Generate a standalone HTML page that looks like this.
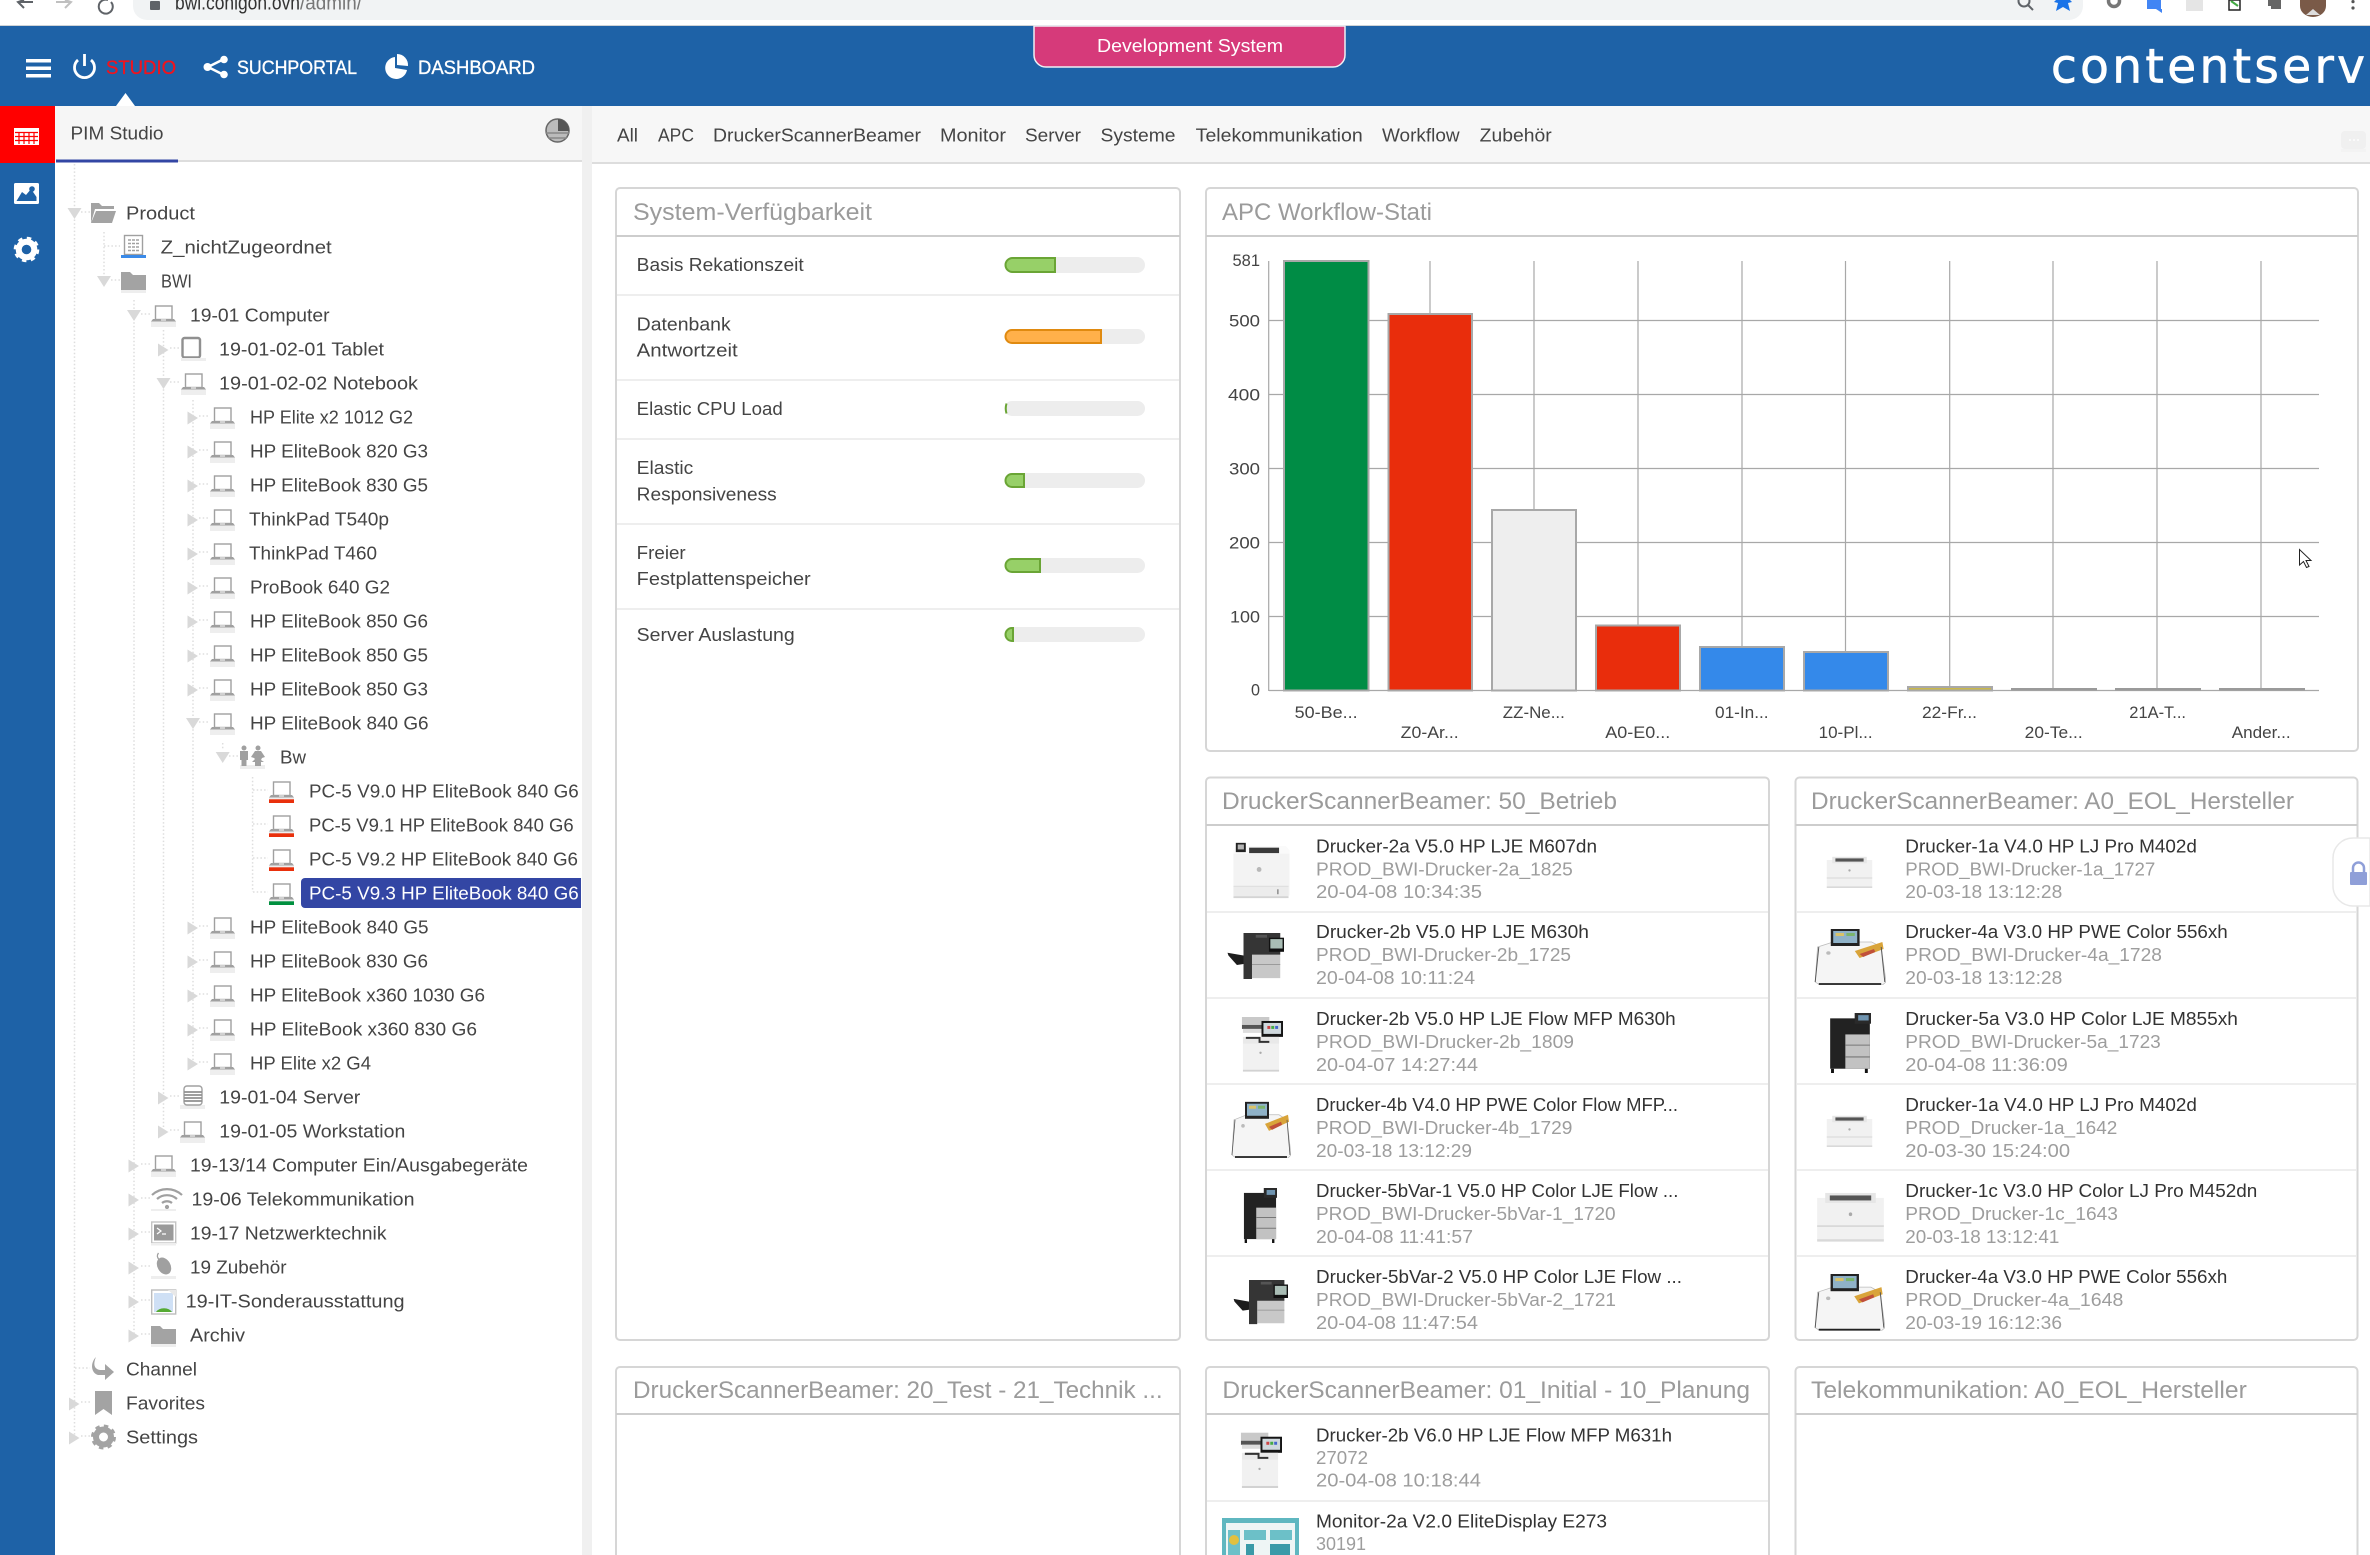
<!DOCTYPE html>
<html lang="de"><head><meta charset="utf-8"><title>contentserv</title>
<style>
html,body{margin:0;padding:0;background:#fff;width:2370px;height:1555px;overflow:hidden}
svg{display:block;position:absolute;left:0;top:0}
text{font-family:"Liberation Sans",sans-serif;font-size:18px;fill:#444;white-space:pre}
.ti{font-size:24px;fill:#9b9b9b}
.a{fill:#333}
.b{fill:#9d9d9d}
.l{font-size:17px;fill:#444}
.h{font-size:19px;fill:#fff;stroke:#fff;stroke-width:.35px}
</style></head><body>
<svg width="2370" height="1555" viewBox="0 0 2370 1555" xmlns="http://www.w3.org/2000/svg">
<defs>
<path id="r" d="M-5.5 -5.5L5 1 -5.500 7.500z" fill="#d9d9d9"/>
<path id="d" d="M-7 -5H7L0 6z" fill="#d9d9d9"/>
<g id="lap"><rect x="4.500" y="-9" width="16.500" height="13.500" fill="#fff" stroke="#a0a0a0" stroke-width="1.400"/><path d="M2 4H23L25 6.500H0z" fill="#a0a0a0"/><rect x="10" y="4.500" width="5" height="1" fill="#fff"/><rect y="6.500" width="25" height="5.500" fill="#eee"/></g>
<g id="fol"><path d="M0 -9H9L12 -6H25V9H0z" fill="#a3a3a3"/><rect y="9" width="25" height="3" fill="#eee"/></g>
<g id="gear"><circle r="7.500" fill="none" stroke="#a3a3a3" stroke-width="6"/><circle r="10.500" fill="none" stroke="#a3a3a3" stroke-width="4" stroke-dasharray="4.200 4.050"/></g>
<symbol id="pw" viewBox="0 0 60 56" preserveAspectRatio="none"><path d="M1 8L4 3.500H56L60 8V53L56 56H4L1 53z" fill="#f3f3f3"/><path d="M1 8L4 3.500H56L60 8V11H1z" fill="#fafafa"/><rect x="1" y="44" width="58" height="10" fill="#ececec"/><rect x="1" y="43.500" width="58" height=".8" fill="#d8d8d8"/><rect x="1" y="54" width="58" height="2" fill="#d4d4d4"/><rect x="3.500" y="0" width="10.500" height="9.500" fill="#222"/><rect x="5.500" y="1.800" width="6.500" height="5" fill="#b5b5b5"/><rect x="17.500" y="5" width="31.500" height="5.500" fill="#3a3a3a"/><circle cx="28" cy="27" r="2.500" fill="#b8b8b8"/><rect x="47" y="47" width="1.500" height="5" fill="#888"/></symbol>
<symbol id="pd" viewBox="0 0 60 50" preserveAspectRatio="none"><path d="M17 0H56V48H17z" fill="#c8c8c8"/><path d="M17 0H56V23H26V49H17z" fill="#353535"/><path d="M0 21L17 24V33L10 34 1 24z" fill="#1d1d1d"/><rect x="44" y="5" width="16" height="15" fill="#111"/><rect x="45.500" y="6.500" width="13" height="10" fill="#a9bdb5"/><rect x="26" y="33" width="30" height="1" fill="#999"/><rect x="30" y="2" width="12" height="3" fill="#555"/></symbol>
<symbol id="pm" viewBox="0 0 44 56" preserveAspectRatio="none"><rect x="2" y="1" width="28" height="8" fill="#c9c9c9"/><rect x="2" y="9" width="24" height="4" fill="#555"/><rect x="3" y="13" width="22" height="4" fill="#ddd"/><rect x="22" y="5" width="22" height="16" fill="#151515"/><rect x="24" y="7" width="18" height="11" fill="#cfd8dd"/><rect x="28" y="10" width="3" height="3" fill="#c44"/><rect x="32" y="10" width="3" height="3" fill="#4a4"/><rect x="36" y="10" width="3" height="3" fill="#46c"/><rect x="3" y="21" width="37" height="7" fill="#e9e9e9"/><path d="M6 22H20V26H30" stroke="#333" stroke-width="2" fill="none"/><rect x="3" y="28" width="37" height="26" fill="#f1f1f1"/><rect x="3" y="54" width="37" height="2" fill="#d2d2d2"/><circle cx="21" cy="37" r="1.200" fill="#aaa"/></symbol>
<symbol id="pf" viewBox="0 0 60 56" preserveAspectRatio="none"><path d="M3 18L16 13H48L56 18 60 53 57 56H5L1 53z" fill="#f5f5f5" stroke="#bbb" stroke-width=".7"/><rect x="14" y="0" width="24" height="17" fill="#222"/><rect x="16" y="2" width="20" height="12" fill="#8fb2c8"/><rect x="18" y="4" width="7" height="3" fill="#d9c36a"/><rect x="27" y="4" width="7" height="3" fill="#7bb56b"/><path d="M34 22L57 13 58 20 38 29z" fill="#d9a43a"/><path d="M38 25L50 20 51 23 41 28z" fill="#c0503a"/><path d="M4 55H56" stroke="#222" stroke-width="1.800"/><path d="M1 53L4 18" stroke="#555" stroke-width=".8"/><path d="M59 53L56 18" stroke="#555" stroke-width=".8"/><circle cx="12" cy="24" r="1.800" fill="#bbb"/></symbol>
<symbol id="pk" viewBox="0 0 36 56" preserveAspectRatio="none"><rect x="1" y="5" width="34" height="47" fill="#222"/><rect x="14" y="20" width="21" height="32" fill="#c2c2c2"/><rect x="22" y="0" width="14" height="10" fill="#2a2a2a"/><rect x="25" y="2" width="9" height="5" fill="#6f94b0"/><path d="M14 30H35M14 41H35" stroke="#777"/><path d="M3 52V56M32 52V56" stroke="#111" stroke-width="2.500"/></symbol>
<symbol id="pl" viewBox="0 0 60 40" preserveAspectRatio="none"><rect x="1" y="5" width="58" height="34" fill="#f1f1f1"/><rect x="1" y="38" width="58" height="2" fill="#d9d9d9"/><rect x="8" y="1" width="44" height="8" fill="#e6e6e6"/><rect x="12" y="3" width="36" height="4" fill="#555"/><rect x="1" y="27" width="58" height="1" fill="#cfcfcf"/><circle cx="30" cy="18" r="1.500" fill="#aaa"/></symbol>
</defs>

<!-- chrome -->
<rect width="2370" height="26" fill="#fff"/>
<path d="M133 0H2083V6A14 14 0 0 1 2069 20H147A14 14 0 0 1 133 6z" fill="#f1f3f4"/>
<rect y="25" width="2370" height="1" fill="#cfd3d6"/>
<g fill="none" stroke="#5f6368" stroke-width="2">
<path d="M33 2H18M24 0L18 2 24 8"/>
<path d="M56 2H71M65 0L71 2 65 8" stroke="#c0c0c0"/>
<path d="M111 2A7 7 0 1 1 108 0"/>
<circle cx="2024" cy="1" r="5.500"/><path d="M2028 5L2033 10"/>
<circle cx="2114" cy="1" r="5.500" stroke="#777" stroke-width="3.500"/>
</g>
<rect x="150" y="1" width="10" height="9" rx="1" fill="#5f6368"/>
<path d="M2056 0H2070L2072 2 2068 3 2070 11 2063 7 2056 11 2058 3 2054 2z" fill="#1a73e8"/>
<rect x="2147" y="0" width="14" height="9" fill="#4285f4"/><path d="M2156 9H2162V13z" fill="#4285f4"/>
<rect x="2186" y="0" width="17" height="11" fill="#e5e5e5"/>
<path d="M2229 0H2240V10H2229z" fill="#fff" stroke="#222" stroke-width="1.500"/><path d="M2231 1L2238 6" stroke="#4a4" stroke-width="2"/>
<path d="M2268 0H2281V9H2271V6H2268z" fill="#666"/>
<path d="M2300 0H2326V6A13 11 0 0 1 2300 6z" fill="#7a5a48"/><path d="M2306 15L2313 9 2320 15z" fill="#ddd"/>
<circle cx="2353" cy="1.600" r="1.600" fill="#555"/><circle cx="2353" cy="8" r="1.600" fill="#555"/>
<text x="175" y="9.500" style="font-size:20px;fill:#333" textLength="125" lengthAdjust="spacingAndGlyphs">bwi.conigon.ovh</text>
<text x="300" y="9.500" style="font-size:20px;fill:#777" textLength="62" lengthAdjust="spacingAndGlyphs">/admin/</text>

<!-- app header -->
<rect y="26" width="2370" height="80" fill="#1e62a7"/>
<rect x="26" y="59" width="25" height="3.500" fill="#fff"/><rect x="26" y="66.500" width="25" height="3.500" fill="#fff"/><rect x="26" y="74" width="25" height="3.500" fill="#fff"/>
<path d="M78 60A10 10 0 1 0 91 60M84.500 54V66" fill="none" stroke="#fff" stroke-width="2.800"/>
<text class="h" x="106" y="74" style="fill:#f0141e;stroke:#f0141e" textLength="70" lengthAdjust="spacingAndGlyphs">STUDIO</text>
<path d="M224 59L208 67 224 75" fill="none" stroke="#fff" stroke-width="2.500"/>
<circle cx="224" cy="59.500" r="3.800" fill="#fff"/><circle cx="207.500" cy="67" r="4" fill="#fff"/><circle cx="224" cy="74.500" r="3.800" fill="#fff"/>
<text class="h" x="237" y="74" textLength="120" lengthAdjust="spacingAndGlyphs">SUCHPORTAL</text>
<path d="M395 57A11 11 0 1 0 407 70L395 68z" fill="#fff"/><path d="M397 54A11 11 0 0 1 408 66L397 65z" fill="#fff"/>
<text class="h" x="418" y="74" textLength="117" lengthAdjust="spacingAndGlyphs">DASHBOARD</text>
<path d="M116 106L125.500 93 135 106z" fill="#fff"/>
<path d="M1034 26V55A12 12 0 0 0 1046 67H1333A12 12 0 0 0 1345 55V26z" fill="#d63a7a" stroke="#eef0f5" stroke-width="1.500"/>
<text x="1097" y="52" style="fill:#fff" textLength="186" lengthAdjust="spacingAndGlyphs">Development System</text>
<text x="2051" y="82.500" style="font-family:'DejaVu Sans',sans-serif;font-size:47px;fill:#fff;stroke:#fff;stroke-width:.7px" textLength="314">contentserv</text>

<!-- left rail -->
<rect y="106" width="55" height="1449" fill="#1e62a7"/>
<rect y="106" width="55" height="57" fill="#f00"/>
<rect x="14" y="128" width="25" height="17" fill="#fff"/>
<path d="M15 132.500H38M15 136.500H38M15 140.500H38M19 132V144M24 132V144M29 132V144M34 132V144" stroke="#f00" stroke-width="1.200"/>
<rect x="14" y="183" width="25" height="21" rx="1.500" fill="#fff"/>
<path d="M16.500 201L22 192 26 195 31 189 36.500 197V201z" fill="#1e62a7"/><circle cx="32" cy="189" r="2.800" fill="#1e62a7"/>
<g transform="translate(26.500 249.500)"><circle r="7.800" fill="none" stroke="#fff" stroke-width="6"/><circle r="10.800" fill="none" stroke="#fff" stroke-width="4" stroke-dasharray="4.200 4.280"/></g>

<!-- tree panel header -->
<rect x="55" y="106" width="527" height="54" fill="#f6f6f6"/>
<rect x="56" y="160" width="526" height="2" fill="#ddd"/>
<rect x="56" y="159.500" width="122" height="3" fill="#3346a4"/>
<text x="70.500" y="139.500" textLength="93" lengthAdjust="spacingAndGlyphs">PIM Studio</text>
<circle cx="557.500" cy="130.500" r="11.500" fill="#bbb" stroke="#666" stroke-width="1.500"/>
<path d="M558 119A11.500 11.500 0 0 1 569 131H558z" fill="#555"/><path d="M546 133H569M548 138H567" stroke="#888" stroke-width="1.500"/>
<rect x="582" y="106" width="10" height="1449" fill="#f0f0f0"/>
<rect x="592" y="106" width="1778" height="56" fill="#f7f7f7"/>
<rect x="592" y="162" width="1778" height="2" fill="#ddd"/>
<g>
<text x="617" y="141.500" textLength="21" lengthAdjust="spacingAndGlyphs">All</text>
<text x="658" y="141.500" textLength="36" lengthAdjust="spacingAndGlyphs">APC</text>
<text x="713" y="141.500" textLength="208" lengthAdjust="spacingAndGlyphs">DruckerScannerBeamer</text>
<text x="940" y="141.500" textLength="66" lengthAdjust="spacingAndGlyphs">Monitor</text>
<text x="1025" y="141.500" textLength="56" lengthAdjust="spacingAndGlyphs">Server</text>
<text x="1100.500" y="141.500" textLength="75" lengthAdjust="spacingAndGlyphs">Systeme</text>
<text x="1195.700" y="141.500" textLength="167" lengthAdjust="spacingAndGlyphs">Telekommunikation</text>
<text x="1382" y="141.500" textLength="77.600" lengthAdjust="spacingAndGlyphs">Workflow</text>
<text x="1479.700" y="141.500" textLength="72" lengthAdjust="spacingAndGlyphs">Zubehör</text>
</g>
<path d="M2345 131H2362A4 4 0 0 1 2366 135V145A4 4 0 0 1 2362 149H2345A4 4 0 0 1 2341 145V135A4 4 0 0 1 2345 131z" fill="#f0f0f0"/>
<path d="M2349 140h2M2353 140h2M2357 140h2" stroke="#fafafa" stroke-width="2"/>
<rect x="2341" y="149" width="25" height="3" fill="#f3f3f3"/>

<!-- tree lines -->
<g fill="none" stroke="#dedede" stroke-width="1.500" stroke-dasharray="1.500 2.200">
<path d="M74.500 164V1436M104 232V276M134 300V1335M163.500 330V1131M193 400V1063M222.700 743V750M252.600 777V892"/>
<path d="M81 212h9M104 246h16M111 280h9M141 314h9M170 348h10M170 382h10M199 416h10M199 450h10M199 484h10M199 518h10M199 552h10M199 586h10M199 620h10M199 654h10M199 688h10M199 722h10M229 756h10M253 790h15M253 824h15M253 858h15M253 892h15M199 926h10M199 960h10M199 994h10M199 1028h10M199 1062h10M170 1096h9M170 1130h9M141 1164h9M141 1198h9M141 1232h9M141 1266h9M141 1300h9M141 1334h9M75 1368h15M81 1402h9M81 1436h9"/>
</g>

<!-- tree arrows -->
<use href="#d" x="74.500" y="213"/><use href="#d" x="104" y="281"/><use href="#d" x="134" y="315"/><use href="#r" x="163.500" y="349"/><use href="#d" x="163.500" y="383"/>
<use href="#r" x="193" y="417"/><use href="#r" x="193" y="451"/><use href="#r" x="193" y="485"/><use href="#r" x="193" y="519"/><use href="#r" x="193" y="553"/><use href="#r" x="193" y="587"/><use href="#r" x="193" y="621"/><use href="#r" x="193" y="655"/><use href="#r" x="193" y="689"/><use href="#d" x="193" y="723"/><use href="#d" x="222.700" y="757"/>
<use href="#r" x="193" y="927"/><use href="#r" x="193" y="961"/><use href="#r" x="193" y="995"/><use href="#r" x="193" y="1029"/><use href="#r" x="193" y="1063"/>
<use href="#r" x="163.500" y="1097"/><use href="#r" x="163.500" y="1131"/>
<use href="#r" x="134" y="1165"/><use href="#r" x="134" y="1199"/><use href="#r" x="134" y="1233"/><use href="#r" x="134" y="1267"/><use href="#r" x="134" y="1301"/><use href="#r" x="134" y="1335"/>
<use href="#r" x="74.500" y="1403"/><use href="#r" x="74.500" y="1437"/>

<!-- tree icons -->
<path d="M91 203H99L102 206H114V209H95L91 223z" fill="#a3a3a3"/><path d="M96 211H116L112 223H91z" fill="#a3a3a3"/>
<g transform="translate(121 247)"><rect x="3.500" y="-11.500" width="18" height="19" fill="#fff" stroke="#a0a0a0" stroke-width="1.400"/><path d="M7 -7H18M7 -3.500H18M7 0H18M7 3.500H18" stroke="#a0a0a0" stroke-width="1.500" stroke-dasharray="3 1"/><rect y="8" width="25" height="3" fill="#3a8ae8"/></g>
<use href="#fol" x="121" y="281"/>
<use href="#lap" x="151" y="315"/>
<g transform="translate(181 349)"><rect x="1.500" y="-11" width="17.500" height="19.500" rx="2" fill="#fff" stroke="#909090" stroke-width="2.400"/><rect y="9" width="25" height="3" fill="#eee"/></g>
<use href="#lap" x="181" y="383"/>
<use href="#lap" x="210" y="417"/><use href="#lap" x="210" y="451"/><use href="#lap" x="210" y="485"/><use href="#lap" x="210" y="519"/><use href="#lap" x="210" y="553"/><use href="#lap" x="210" y="587"/><use href="#lap" x="210" y="621"/><use href="#lap" x="210" y="655"/><use href="#lap" x="210" y="689"/><use href="#lap" x="210" y="723"/>
<g transform="translate(240 757)"><rect y="8" width="25" height="4" fill="#eee"/><circle cx="4" cy="-9" r="2.500" fill="#a0a0a0"/><path d="M0 -6H8V3H6.500V9H1.500V3H0z" fill="#a0a0a0"/><circle cx="18" cy="-9" r="2.500" fill="#a0a0a0"/><path d="M15 -6H21L25 0 22 1 21 3 24 5H21V9H15V5H12L15 2 14 1 11 0z" fill="#a0a0a0"/></g>
<use href="#lap" x="269" y="791"/><rect x="269" y="799.300" width="25" height="3.700" fill="#e9300c"/>
<use href="#lap" x="269" y="825"/><rect x="269" y="833.300" width="25" height="3.700" fill="#e9300c"/>
<use href="#lap" x="269" y="859"/><rect x="269" y="867.300" width="25" height="3.700" fill="#e9300c"/>
<path d="M305 878H581V908H305A4 4 0 0 1 301 904V882A4 4 0 0 1 305 878z" fill="#3346a4"/>
<use href="#lap" x="269" y="893"/><rect x="269" y="901.300" width="25" height="3.700" fill="#00903f"/>
<use href="#lap" x="210" y="927"/><use href="#lap" x="210" y="961"/><use href="#lap" x="210" y="995"/><use href="#lap" x="210" y="1029"/><use href="#lap" x="210" y="1063"/>
<g transform="translate(180 1097)"><rect y="8" width="25" height="4" fill="#eee"/><rect x="4" y="-11" width="18" height="19" rx="3" fill="#fff" stroke="#a0a0a0" stroke-width="1.400"/><path d="M4 -5H22M4 -2H22M4 1H22M4 4H22" stroke="#909090" stroke-width="1.800"/></g>
<use href="#lap" x="180" y="1131"/>
<use href="#lap" x="151" y="1165"/>
<g transform="translate(151 1199)" fill="none" stroke="#a0a0a0" stroke-width="2.200"><path d="M1 -4A22 22 0 0 1 31 -4M6 0A15 15 0 0 1 26 0M11 4A8 8 0 0 1 21 4"/><circle cx="16" cy="8" r="1" /><rect x="0" y="10" width="25" height="2" fill="#eee" stroke="none"/></g>
<g transform="translate(151 1233)"><rect x=".700" y="-11" width="24" height="21" fill="#fff" stroke="#c4c4c4" stroke-width="1.400"/><rect x="3" y="-8.500" width="19.500" height="16" fill="#9a9a9a"/><path d="M6 -5L10 -2 6 1M11 1H15" fill="none" stroke="#fff" stroke-width="1.200"/><rect y="10" width="25" height="2.500" fill="#eee"/></g>
<g transform="translate(151 1267)"><ellipse cx="13" cy="-1" rx="6.500" ry="9" transform="rotate(-30 13 -1)" fill="#a0a0a0"/><path d="M8.500 -7C5.500 -10 6 -12 7.500 -14" stroke="#a0a0a0" fill="none" stroke-width="1.400"/><rect y="9" width="25" height="3" fill="#eee"/></g>
<g transform="translate(151 1301)"><rect x=".700" y="-11" width="24" height="24" fill="#fff" stroke="#bcbcbc" stroke-width="1.400"/><rect x="3" y="-8" width="19" height="19" fill="#cfe0f5"/><path d="M5 11A9 7 0 0 1 21 11z" fill="#55aa33"/><path d="M17 -11L25 -4V-11z" fill="#e8e8e8"/></g>
<use href="#fol" x="151" y="1335"/>
<path d="M96 1357C93 1364 94 1369 100 1370H105V1364L114 1372 105 1380V1375H98C91 1373 90 1363 96 1357z" fill="#a3a3a3"/>
<path d="M95 1391H112V1415L103.500 1409 95 1415z" fill="#a3a3a3"/>
<use href="#gear" x="103.500" y="1437"/>

<!-- tree text -->
<g>
<text x="126" y="219.500" textLength="69" lengthAdjust="spacingAndGlyphs">Product</text>
<text x="160.700" y="253.500" textLength="171" lengthAdjust="spacingAndGlyphs">Z_nichtZugeordnet</text>
<text x="161" y="287.500" textLength="31" lengthAdjust="spacingAndGlyphs">BWI</text>
<text x="190" y="321.500" textLength="139.600" lengthAdjust="spacingAndGlyphs">19-01 Computer</text>
<text x="219" y="355.500" textLength="165" lengthAdjust="spacingAndGlyphs">19-01-02-01 Tablet</text>
<text x="219" y="389.500" textLength="199" lengthAdjust="spacingAndGlyphs">19-01-02-02 Notebook</text>
<text x="250" y="423.500" textLength="163" lengthAdjust="spacingAndGlyphs">HP Elite x2 1012 G2</text>
<text x="250" y="457.500" textLength="178" lengthAdjust="spacingAndGlyphs">HP EliteBook 820 G3</text>
<text x="250" y="491.500" textLength="178" lengthAdjust="spacingAndGlyphs">HP EliteBook 830 G5</text>
<text x="249" y="525.500" textLength="140" lengthAdjust="spacingAndGlyphs">ThinkPad T540p</text>
<text x="249" y="559.500" textLength="128" lengthAdjust="spacingAndGlyphs">ThinkPad T460</text>
<text x="250" y="593.500" textLength="140" lengthAdjust="spacingAndGlyphs">ProBook 640 G2</text>
<text x="250" y="627.500" textLength="178" lengthAdjust="spacingAndGlyphs">HP EliteBook 850 G6</text>
<text x="250" y="661.500" textLength="178" lengthAdjust="spacingAndGlyphs">HP EliteBook 850 G5</text>
<text x="250" y="695.500" textLength="178" lengthAdjust="spacingAndGlyphs">HP EliteBook 850 G3</text>
<text x="250" y="729.500" textLength="178.600" lengthAdjust="spacingAndGlyphs">HP EliteBook 840 G6</text>
<text x="280" y="763.500" textLength="26" lengthAdjust="spacingAndGlyphs">Bw</text>
<text x="309" y="797.500" textLength="269.700" lengthAdjust="spacingAndGlyphs">PC-5 V9.0 HP EliteBook 840 G6</text>
<text x="309" y="831.500" textLength="264.700" lengthAdjust="spacingAndGlyphs">PC-5 V9.1 HP EliteBook 840 G6</text>
<text x="309" y="865.500" textLength="269" lengthAdjust="spacingAndGlyphs">PC-5 V9.2 HP EliteBook 840 G6</text>
<text x="309" y="899.500" style="fill:#fff" textLength="269.700" lengthAdjust="spacingAndGlyphs">PC-5 V9.3 HP EliteBook 840 G6</text>
<text x="250" y="933.500" textLength="178.600" lengthAdjust="spacingAndGlyphs">HP EliteBook 840 G5</text>
<text x="250" y="967.500" textLength="178" lengthAdjust="spacingAndGlyphs">HP EliteBook 830 G6</text>
<text x="250" y="1001.500" textLength="235" lengthAdjust="spacingAndGlyphs">HP EliteBook x360 1030 G6</text>
<text x="250" y="1035.500" textLength="227" lengthAdjust="spacingAndGlyphs">HP EliteBook x360 830 G6</text>
<text x="250" y="1069.500" textLength="121" lengthAdjust="spacingAndGlyphs">HP Elite x2 G4</text>
<text x="219.300" y="1103.500" textLength="141" lengthAdjust="spacingAndGlyphs">19-01-04 Server</text>
<text x="219.300" y="1137.500" textLength="186" lengthAdjust="spacingAndGlyphs">19-01-05 Workstation</text>
<text x="190" y="1171.500" textLength="338" lengthAdjust="spacingAndGlyphs">19-13/14 Computer Ein/Ausgabegeräte</text>
<text x="191.500" y="1205.500" textLength="223" lengthAdjust="spacingAndGlyphs">19-06 Telekommunikation</text>
<text x="190" y="1239.500" textLength="196.500" lengthAdjust="spacingAndGlyphs">19-17 Netzwerktechnik</text>
<text x="190" y="1273.500" textLength="96.600" lengthAdjust="spacingAndGlyphs">19 Zubehör</text>
<text x="185.600" y="1307.500" textLength="219" lengthAdjust="spacingAndGlyphs">19-IT-Sonderausstattung</text>
<text x="190" y="1341.500" textLength="55" lengthAdjust="spacingAndGlyphs">Archiv</text>
<text x="126" y="1375.500" textLength="71" lengthAdjust="spacingAndGlyphs">Channel</text>
<text x="126" y="1409.500" textLength="79" lengthAdjust="spacingAndGlyphs">Favorites</text>
<text x="126" y="1443.500" textLength="72" lengthAdjust="spacingAndGlyphs">Settings</text>
</g>

<!-- panel frames -->
<g fill="#fff" stroke="#d6d6d6" stroke-width="2">
<rect x="616" y="188" width="564" height="1152" rx="4"/>
<rect x="1206" y="188" width="1152" height="563" rx="4"/>
<rect x="1206" y="777.500" width="563" height="562.500" rx="4"/>
<rect x="1795.500" y="777.500" width="562" height="562.500" rx="4"/>
<path d="M616 1555V1371A4 4 0 0 1 620 1367H1176A4 4 0 0 1 1180 1371V1555"/>
<path d="M1206 1555V1371A4 4 0 0 1 1210 1367H1765A4 4 0 0 1 1769 1371V1555"/>
<path d="M1795.500 1555V1371A4 4 0 0 1 1799.500 1367H2353.500A4 4 0 0 1 2357.500 1371V1555"/>
</g>
<g stroke="#cdcdcd" stroke-width="2">
<path d="M616 236H1180M1206 236H2358M1206 825H1769M1795.500 825H2357.500M616 1414H1180M1206 1414H1769M1795.500 1414H2357.500"/>
</g>
<g stroke="#eee" stroke-width="2">
<path d="M617 295H1179M617 380H1179M617 439H1179M617 524H1179M617 609H1179"/>
<path d="M1207 912H1768M1207 998H1768M1207 1084H1768M1207 1170H1768M1207 1256H1768"/>
<path d="M1797 912H2356M1797 998H2356M1797 1084H2356M1797 1170H2356M1797 1256H2356"/>
<path d="M1207 1501H1768"/>
</g>
<!-- titles -->
<text class="ti" x="633" y="220" textLength="239" lengthAdjust="spacingAndGlyphs">System-Verfügbarkeit</text>
<text class="ti" x="1222" y="220" textLength="210" lengthAdjust="spacingAndGlyphs">APC Workflow-Stati</text>
<text class="ti" x="1222" y="809" textLength="395" lengthAdjust="spacingAndGlyphs">DruckerScannerBeamer: 50_Betrieb</text>
<text class="ti" x="1811" y="809" textLength="483" lengthAdjust="spacingAndGlyphs">DruckerScannerBeamer: A0_EOL_Hersteller</text>
<text class="ti" x="633" y="1398" textLength="529.600" lengthAdjust="spacingAndGlyphs">DruckerScannerBeamer: 20_Test - 21_Technik ...</text>
<text class="ti" x="1222.400" y="1398" textLength="527.600" lengthAdjust="spacingAndGlyphs">DruckerScannerBeamer: 01_Initial - 10_Planung</text>
<text class="ti" x="1811" y="1398" textLength="435.800" lengthAdjust="spacingAndGlyphs">Telekommunikation: A0_EOL_Hersteller</text>

<!-- system rows -->
<g>
<text x="636.700" y="271" textLength="167" lengthAdjust="spacingAndGlyphs">Basis Rekationszeit</text>
<text x="636.700" y="330.500" textLength="94" lengthAdjust="spacingAndGlyphs">Datenbank</text>
<text x="636.700" y="356.500" textLength="101" lengthAdjust="spacingAndGlyphs">Antwortzeit</text>
<text x="636.700" y="415" textLength="146" lengthAdjust="spacingAndGlyphs">Elastic CPU Load</text>
<text x="636.700" y="474" textLength="56.600" lengthAdjust="spacingAndGlyphs">Elastic</text>
<text x="636.700" y="500.500" textLength="140" lengthAdjust="spacingAndGlyphs">Responsiveness</text>
<text x="636.700" y="559" textLength="49" lengthAdjust="spacingAndGlyphs">Freier</text>
<text x="636.700" y="585" textLength="174" lengthAdjust="spacingAndGlyphs">Festplattenspeicher</text>
<text x="636.700" y="641" textLength="158" lengthAdjust="spacingAndGlyphs">Server Auslastung</text>
</g>
<g fill="#ededed">
<rect x="1004.500" y="257" width="140.500" height="16" rx="8"/>
<rect x="1004.500" y="329" width="140.500" height="15" rx="7.500"/>
<rect x="1004.500" y="401" width="140.500" height="15" rx="7.500"/>
<rect x="1004.500" y="473" width="140.500" height="15" rx="7.500"/>
<rect x="1004.500" y="558" width="140.500" height="15" rx="7.500"/>
<rect x="1004.500" y="627" width="140.500" height="15" rx="7.500"/>
</g>
<g fill="#97d068" stroke="#6aa535" stroke-width="2">
<path d="M1055 258V272H1012.500A7 7 0 0 1 1012.500 258z"/>
<path d="M1024 474V487H1012A6.500 6.500 0 0 1 1012 474z"/>
<path d="M1040 559V572H1012A6.500 6.500 0 0 1 1012 559z"/>
<path d="M1013 628V641H1012A6.500 6.500 0 0 1 1012 628z"/>
<path d="M1006.500 403.500Q1005 408.500 1006.500 413.500" fill="none"/>
</g>
<path d="M1101 330V343H1012A6.500 6.500 0 0 1 1012 330z" fill="#ffb04a" stroke="#e08a10" stroke-width="2"/>

<!-- chart -->
<g stroke="#a8a8a8" stroke-width="1.200">
<path d="M1269 320.500H2319M1269 394.500H2319M1269 468.500H2319M1269 542.500H2319M1269 616.500H2319M1269 690.500H2319"/>
<path d="M1268.700 261V691M1430 261V314M1534 261V510M1638 261V625M1742 261V647M1845.500 261V652M1949.700 261V687M2053 261V689M2157 261V689M2261 261V689"/>
</g>
<g stroke="#a8a8a8" stroke-width="2">
<rect x="1284" y="261" width="84.500" height="429.500" fill="#008c45"/>
<rect x="1388.500" y="314" width="83.500" height="376.500" fill="#e92d0c"/>
<rect x="1492" y="510" width="84" height="180.500" fill="#eee"/>
<rect x="1596" y="625.500" width="84" height="65" fill="#e92d0c"/>
<rect x="1700" y="647" width="84" height="43.500" fill="#3489ea"/>
<rect x="1804" y="652" width="84" height="38.500" fill="#3489ea"/>
<rect x="1908" y="687" width="84" height="3.500" fill="#c9b74a"/>
</g>
<g fill="#9a9a9a"><rect x="2011" y="688" width="86" height="2.500"/><rect x="2115" y="688" width="86" height="2.500"/><rect x="2219" y="688" width="86" height="2.500"/></g>
<g>
<text class="l" x="1260" y="266" text-anchor="end" textLength="27.500" lengthAdjust="spacingAndGlyphs">581</text>
<text class="l" x="1260" y="326.500" text-anchor="end" textLength="31" lengthAdjust="spacingAndGlyphs">500</text>
<text class="l" x="1260" y="400.500" text-anchor="end" textLength="32" lengthAdjust="spacingAndGlyphs">400</text>
<text class="l" x="1260" y="474.500" text-anchor="end" textLength="31" lengthAdjust="spacingAndGlyphs">300</text>
<text class="l" x="1260" y="548.500" text-anchor="end" textLength="31" lengthAdjust="spacingAndGlyphs">200</text>
<text class="l" x="1260" y="622.500" text-anchor="end" textLength="30" lengthAdjust="spacingAndGlyphs">100</text>
<text class="l" x="1260" y="695.500" text-anchor="end" textLength="9" lengthAdjust="spacingAndGlyphs">0</text>
<text class="l" x="1294.600" y="718" textLength="63" lengthAdjust="spacingAndGlyphs">50-Be...</text>
<text class="l" x="1400.700" y="738" textLength="58" lengthAdjust="spacingAndGlyphs">Z0-Ar...</text>
<text class="l" x="1502.800" y="718" textLength="62" lengthAdjust="spacingAndGlyphs">ZZ-Ne...</text>
<text class="l" x="1605.300" y="738" textLength="65" lengthAdjust="spacingAndGlyphs">A0-E0...</text>
<text class="l" x="1715" y="718" textLength="53.600" lengthAdjust="spacingAndGlyphs">01-In...</text>
<text class="l" x="1818.600" y="738" textLength="54" lengthAdjust="spacingAndGlyphs">10-Pl...</text>
<text class="l" x="1922" y="718" textLength="55" lengthAdjust="spacingAndGlyphs">22-Fr...</text>
<text class="l" x="2024.700" y="738" textLength="58" lengthAdjust="spacingAndGlyphs">20-Te...</text>
<text class="l" x="2129.300" y="718" textLength="56.700" lengthAdjust="spacingAndGlyphs">21A-T...</text>
<text class="l" x="2231.700" y="738" textLength="59" lengthAdjust="spacingAndGlyphs">Ander...</text>
</g>

<!-- thumbnails -->
<use href="#pw" x="1232.500" y="842.700" width="57" height="55.500"/>
<use href="#pd" x="1227.500" y="933" width="56.500" height="47"/>
<use href="#pm" x="1240" y="1016" width="43" height="55.700"/>
<use href="#pf" x="1231" y="1101.700" width="60" height="56.300"/>
<use href="#pk" x="1243" y="1188" width="34" height="55"/>
<use href="#pd" x="1233.600" y="1280" width="54.400" height="45"/>
<use href="#pl" x="1826" y="856" width="47" height="32"/>
<use href="#pf" x="1814" y="929" width="72" height="56"/>
<use href="#pk" x="1829" y="1013" width="42" height="60"/>
<use href="#pl" x="1826" y="1115" width="47" height="32"/>
<use href="#pl" x="1816" y="1191.700" width="69" height="50"/>
<use href="#pf" x="1814" y="1274" width="71" height="56.700"/>
<use href="#pm" x="1239" y="1431.700" width="43" height="56.300"/>
<rect x="1222" y="1518" width="77" height="37" fill="#5fb7c0"/>
<rect x="1226" y="1523" width="69" height="32" fill="#eef5f5"/>
<path d="M1228 1530h12v25h-12zM1244 1530h22v10h-22zM1270 1530h22v10h-22z" fill="#6cc0c8"/>
<path d="M1246 1544h8v11h-8zM1270 1544h20v11h-20z" fill="#3a9aa8"/><circle cx="1234" cy="1540" r="5" fill="#e0c040"/>

<!-- list panel 2 -->
<g>
<text class="a" x="1316" y="852.500" textLength="281" lengthAdjust="spacingAndGlyphs">Drucker-2a V5.0 HP LJE M607dn</text>
<text class="b" x="1316" y="875.500" textLength="256.800" lengthAdjust="spacingAndGlyphs">PROD_BWI-Drucker-2a_1825</text>
<text class="b" x="1316" y="898.200" textLength="166" lengthAdjust="spacingAndGlyphs">20-04-08 10:34:35</text>
<text class="a" x="1316" y="938.200" textLength="272.900" lengthAdjust="spacingAndGlyphs">Drucker-2b V5.0 HP LJE M630h</text>
<text class="b" x="1316" y="961.200" textLength="255" lengthAdjust="spacingAndGlyphs">PROD_BWI-Drucker-2b_1725</text>
<text class="b" x="1316" y="984.200" textLength="159" lengthAdjust="spacingAndGlyphs">20-04-08 10:11:24</text>
<text class="a" x="1316" y="1025.200" textLength="359.700" lengthAdjust="spacingAndGlyphs">Drucker-2b V5.0 HP LJE Flow MFP M630h</text>
<text class="b" x="1316" y="1048.200" textLength="258" lengthAdjust="spacingAndGlyphs">PROD_BWI-Drucker-2b_1809</text>
<text class="b" x="1316" y="1071.200" textLength="162" lengthAdjust="spacingAndGlyphs">20-04-07 14:27:44</text>
<text class="a" x="1316" y="1111.200" textLength="362" lengthAdjust="spacingAndGlyphs">Drucker-4b V4.0 HP PWE Color Flow MFP...</text>
<text class="b" x="1316" y="1134.200" textLength="256.400" lengthAdjust="spacingAndGlyphs">PROD_BWI-Drucker-4b_1729</text>
<text class="b" x="1316" y="1157.200" textLength="156" lengthAdjust="spacingAndGlyphs">20-03-18 13:12:29</text>
<text class="a" x="1316" y="1197.200" textLength="362.400" lengthAdjust="spacingAndGlyphs">Drucker-5bVar-1 V5.0 HP Color LJE Flow ...</text>
<text class="b" x="1316" y="1220.200" textLength="299.600" lengthAdjust="spacingAndGlyphs">PROD_BWI-Drucker-5bVar-1_1720</text>
<text class="b" x="1316" y="1243.200" textLength="157" lengthAdjust="spacingAndGlyphs">20-04-08 11:41:57</text>
<text class="a" x="1316" y="1283.200" textLength="366" lengthAdjust="spacingAndGlyphs">Drucker-5bVar-2 V5.0 HP Color LJE Flow ...</text>
<text class="b" x="1316" y="1306.200" textLength="300" lengthAdjust="spacingAndGlyphs">PROD_BWI-Drucker-5bVar-2_1721</text>
<text class="b" x="1316" y="1329.200" textLength="162" lengthAdjust="spacingAndGlyphs">20-04-08 11:47:54</text>
</g>
<!-- list panel 3 -->
<g>
<text class="a" x="1905.300" y="852.500" textLength="291.600" lengthAdjust="spacingAndGlyphs">Drucker-1a V4.0 HP LJ Pro M402d</text>
<text class="b" x="1905.300" y="875.500" textLength="250" lengthAdjust="spacingAndGlyphs">PROD_BWI-Drucker-1a_1727</text>
<text class="b" x="1905.300" y="898.200" textLength="157" lengthAdjust="spacingAndGlyphs">20-03-18 13:12:28</text>
<text class="a" x="1905.300" y="938.200" textLength="322.400" lengthAdjust="spacingAndGlyphs">Drucker-4a V3.0 HP PWE Color 556xh</text>
<text class="b" x="1905.300" y="961.200" textLength="256.600" lengthAdjust="spacingAndGlyphs">PROD_BWI-Drucker-4a_1728</text>
<text class="b" x="1905.300" y="984.200" textLength="157" lengthAdjust="spacingAndGlyphs">20-03-18 13:12:28</text>
<text class="a" x="1905.300" y="1025.200" textLength="332.600" lengthAdjust="spacingAndGlyphs">Drucker-5a V3.0 HP Color LJE M855xh</text>
<text class="b" x="1905.300" y="1048.200" textLength="255.500" lengthAdjust="spacingAndGlyphs">PROD_BWI-Drucker-5a_1723</text>
<text class="b" x="1905.300" y="1071.200" textLength="162.500" lengthAdjust="spacingAndGlyphs">20-04-08 11:36:09</text>
<text class="a" x="1905.300" y="1111.200" textLength="291.600" lengthAdjust="spacingAndGlyphs">Drucker-1a V4.0 HP LJ Pro M402d</text>
<text class="b" x="1905.300" y="1134.200" textLength="212" lengthAdjust="spacingAndGlyphs">PROD_Drucker-1a_1642</text>
<text class="b" x="1905.300" y="1157.200" textLength="164.800" lengthAdjust="spacingAndGlyphs">20-03-30 15:24:00</text>
<text class="a" x="1905.300" y="1197.200" textLength="352" lengthAdjust="spacingAndGlyphs">Drucker-1c V3.0 HP Color LJ Pro M452dn</text>
<text class="b" x="1905.300" y="1220.200" textLength="212.600" lengthAdjust="spacingAndGlyphs">PROD_Drucker-1c_1643</text>
<text class="b" x="1905.300" y="1243.200" textLength="154" lengthAdjust="spacingAndGlyphs">20-03-18 13:12:41</text>
<text class="a" x="1905.300" y="1283.200" textLength="322" lengthAdjust="spacingAndGlyphs">Drucker-4a V3.0 HP PWE Color 556xh</text>
<text class="b" x="1905.300" y="1306.200" textLength="218" lengthAdjust="spacingAndGlyphs">PROD_Drucker-4a_1648</text>
<text class="b" x="1905.300" y="1329.200" textLength="156.700" lengthAdjust="spacingAndGlyphs">20-03-19 16:12:36</text>
</g>
<!-- bottom list -->
<g>
<text class="a" x="1316" y="1441.500" textLength="356" lengthAdjust="spacingAndGlyphs">Drucker-2b V6.0 HP LJE Flow MFP M631h</text>
<text class="b" x="1316" y="1464.200" textLength="52" lengthAdjust="spacingAndGlyphs">27072</text>
<text class="b" x="1316" y="1486.500" textLength="165" lengthAdjust="spacingAndGlyphs">20-04-08 10:18:44</text>
<text class="a" x="1316" y="1527.500" textLength="291" lengthAdjust="spacingAndGlyphs">Monitor-2a V2.0 EliteDisplay E273</text>
<text class="b" x="1316" y="1550.200" textLength="50" lengthAdjust="spacingAndGlyphs">30191</text>
</g>

<!-- lock tab -->
<path d="M2370 838H2353A20 20 0 0 0 2333 858V886A20 20 0 0 0 2353 906H2370z" fill="#fff" stroke="#e8e8e8" stroke-width="1.500"/>
<rect x="2350" y="872" width="17" height="13" rx="1" fill="#8f9fd8"/>
<path d="M2353 872V868A5.500 5.500 0 0 1 2364 868V872" fill="none" stroke="#8f9fd8" stroke-width="2.500"/>

<!-- cursor -->
<path d="M2299.500 549.500V565L2303.500 561.500 2306.500 567.500 2309 566.500 2306 560.500H2311z" fill="#fff" stroke="#222" stroke-width="1"/>
</svg>
</body></html>
